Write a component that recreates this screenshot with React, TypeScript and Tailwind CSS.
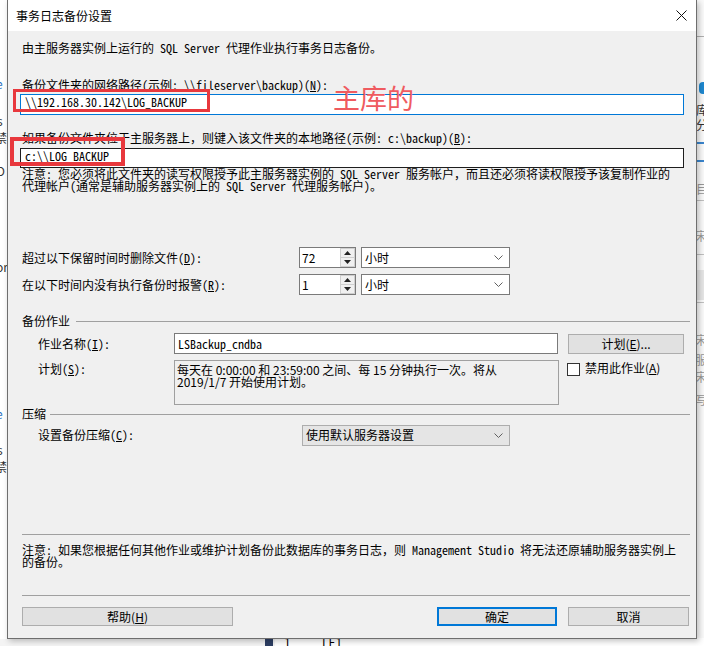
import React from "react";

const mono = "font-['Noto_Sans_Mono_CJK_SC','Noto_Sans_CJK_SC',sans-serif]";
const sans = "font-['Noto_Sans_CJK_SC',sans-serif]";

function U({ children }: { children: React.ReactNode }) {
  return <span className="underline underline-offset-[1px]">{children}</span>;
}

function Chevron() {
  return (
    <svg width="9" height="5" viewBox="0 0 9 5">
      <path d="M0.5 0.5L4.5 4.5L8.5 0.5" fill="none" stroke="#606060" strokeWidth="1" />
    </svg>
  );
}

function Spin({ value }: { value: string }) {
  return (
    <div className="w-[57px] h-[21px] border border-[#7a7a7a] bg-white flex">
      <div className={"flex-1 flex items-center pl-[2px] " + sans}>{value}</div>
      <div className="w-[15px] flex flex-col">
        <div className="flex-1 bg-[#f0f0f0] border border-[#cfcfcf] flex items-center justify-center">
          <svg width="7" height="4" viewBox="0 0 7 4">
            <path d="M0 4L3.5 0L7 4Z" fill="#222" />
          </svg>
        </div>
        <div className="flex-1 bg-[#f0f0f0] border border-[#cfcfcf] border-t-0 flex items-center justify-center">
          <svg width="7" height="4" viewBox="0 0 7 4">
            <path d="M0 0L3.5 4L7 0Z" fill="#222" />
          </svg>
        </div>
      </div>
    </div>
  );
}

function Select({ text, w, disabled }: { text: string; w: string; disabled?: boolean }) {
  return (
    <div
      className={
        "h-[21px] border flex items-center justify-between pl-[3px] pr-[6px] " +
        w +
        " " +
        sans +
        (disabled ? " bg-[#e5e5e5] border-[#adadad]" : " bg-white border-[#7a7a7a]")
      }
    >
      <span>{text}</span>
      <Chevron />
    </div>
  );
}

export default function App() {
  return (
    <div className="relative w-[704px] h-[646px] overflow-hidden bg-[#f4f4f4] text-black">
      {/* left background window */}
      <div className="absolute left-0 top-0 w-[10px] h-[639px] bg-white">
        <span className={"absolute left-[-4px] top-[75px] text-[12px] text-[#1f6fc0] " + sans}>e</span>
        <span className={"absolute left-[-3px] top-[112px] text-[12px] text-[#333] " + sans}>s</span>
        <span className={"absolute left-[-5px] top-[129px] text-[12px] text-[#333] " + sans}>禁</span>
        <span className={"absolute left-[-4px] top-[162px] text-[12px] text-[#333] " + sans}>O</span>
        <span className={"absolute left-[-4px] top-[258px] text-[12px] text-[#333] " + sans}>or</span>
        <span className={"absolute left-[-4px] top-[405px] text-[12px] text-[#1f6fc0] " + sans}>e</span>
        <span className={"absolute left-[-3px] top-[441px] text-[12px] text-[#333] " + sans}>s</span>
        <span className={"absolute left-[-5px] top-[458px] text-[12px] text-[#333] " + sans}>禁</span>
      </div>
      {/* right background window */}
      <div className="absolute left-[697px] top-0 w-[7px] h-[646px] bg-[#fafafa]">
        <div className="absolute left-0 top-[36px] w-[7px] h-px bg-[#b0b0b0]" />
        <div className="absolute left-[2px] top-[82px] w-[8px] h-[12px] rounded-full bg-[#1e88d0]" />
        <span className={"absolute left-[-1px] top-[101px] text-[12px] text-[#333] " + sans}>库</span>
        <span className={"absolute left-[-1px] top-[116px] text-[12px] text-[#333] " + sans}>分</span>
        <div className="absolute left-0 top-[142px] w-[7px] h-[20px] border-t-2 border-b-2 border-[#3a86cf]" />
        <span className={"absolute left-[-1px] top-[180px] text-[12px] text-[#999] " + sans}>目</span>
        <div className="absolute left-0 top-[200px] w-[7px] h-px bg-[#c0c0c0]" />
        <span className={"absolute left-[-2px] top-[227px] text-[12px] text-[#999] " + sans}>宋</span>
        <div className="absolute left-0 top-[254px] w-[7px] h-px bg-[#c0c0c0]" />
        <div className="absolute left-0 top-[270px] w-[7px] h-[30px] bg-[#e6e6e6]" />
        <div className="absolute left-0 top-[302px] w-[7px] h-px bg-[#c0c0c0]" />
        <span className={"absolute left-[-2px] top-[331px] text-[12px] text-[#999] " + sans}>宋</span>
        <span className={"absolute left-[-2px] top-[351px] text-[12px] text-[#999] " + sans}>服</span>
        <span className={"absolute left-[-2px] top-[368px] text-[12px] text-[#999] " + sans}>宋</span>
        <span className={"absolute left-[-2px] top-[391px] text-[12px] text-[#999] " + sans}>写</span>
      </div>
      {/* bottom background */}
      <div className="absolute left-[265px] top-[638px] w-[8px] h-[8px] bg-[#2d3e63]" />
      <div className="absolute left-[275px] top-[638px] w-[429px] h-[8px] bg-white" />
      <span className={"absolute left-[284px] top-[636px] text-[12px] leading-[12px] " + sans}>1</span>
      <span className={"absolute left-[322px] top-[636px] text-[12px] leading-[12px] " + sans}>LE1</span>

      {/* dialog */}
      <div className="absolute left-[7px] top-0 w-[690px] h-[639px] border-x border-b border-[#6e6e6e] bg-[#f0f0f0] flex flex-col text-[12px] shadow-[2px_2px_6px_rgba(0,0,0,0.25)]">
        <div className="h-[31px] shrink-0 bg-white flex items-center justify-between pl-[8px] pr-[9px]">
          <span className={"leading-none " + sans}>事务日志备份设置</span>
          <svg width="11" height="11" viewBox="0 0 11 11">
            <path d="M0.5 0.5L10.5 10.5M10.5 0.5L0.5 10.5" stroke="#111" strokeWidth="1" />
          </svg>
        </div>

        <div className={"flex flex-col pl-[14px] pr-[12px] " + mono}>
          <div className="mt-[10px] h-[14px] leading-[14px] whitespace-nowrap">
            由主服务器实例上运行的 SQL Server 代理作业执行事务日志备份。
          </div>

          <div className="mt-[23px] h-[14px] leading-[14px] whitespace-nowrap">
            {"备份文件夹的网络路径(示例: \\\\fileserver\\backup)("}
            <U>N</U>):
          </div>
          <div className="mt-[2px] ml-[-2px] h-[21px] border border-[#0078d7] bg-white flex items-center pl-[4px] pb-[6px] leading-[12px] whitespace-nowrap">
            {"\\\\192.168.30.142\\LOG_BACKUP"}
          </div>

          <div className="mt-[16px] h-[14px] leading-[14px] whitespace-nowrap">
            {"如果备份文件夹位于主服务器上，则键入该文件夹的本地路径(示例: c:\\backup)("}
            <U>B</U>):
          </div>
          <div className="mt-[3px] ml-[-2px] h-[20px] border border-[#1e1e1e] bg-white flex items-center pl-[4px] pb-[5px] leading-[12px] whitespace-nowrap">
            {"c:\\\\LOG_BACKUP"}
          </div>

          <div className="leading-[12px] whitespace-nowrap">
            <div>注意: 您必须将此文件夹的读写权限授予此主服务器实例的 SQL Server 服务帐户，而且还必须将读权限授予该复制作业的</div>
            <div>代理帐户(通常是辅助服务器实例上的 SQL Server 代理服务帐户)。</div>
          </div>

          <div className="mt-[55px] h-[21px] flex items-center">
            <div className="w-[277px] whitespace-nowrap">
              超过以下保留时间时删除文件(<U>D</U>):
            </div>
            <Spin value="72" />
            <div className="ml-[5px]">
              <Select text="小时" w="w-[149px]" />
            </div>
          </div>
          <div className="mt-[6px] h-[21px] flex items-center">
            <div className="w-[277px] whitespace-nowrap">
              在以下时间内没有执行备份时报警(<U>R</U>):
            </div>
            <Spin value="1" />
            <div className="ml-[5px]">
              <Select text="小时" w="w-[149px]" />
            </div>
          </div>

          <div className="mt-[19px] h-[14px] flex items-center gap-[6px] mr-[-6px]">
            <span className="leading-[14px]">备份作业</span>
            <div className="flex-1 h-px bg-[#a0a0a0]" />
          </div>

          <div className="mt-[5px] h-[21px] flex items-center pl-[16px]">
            <div className="w-[136px] whitespace-nowrap">
              作业名称(<U>I</U>):
            </div>
            <div className="w-[384px] h-[21px] border border-[#7a7a7a] bg-white flex items-center pl-[3px]">
              LSBackup_cndba
            </div>
            <div className={"ml-[10px] w-[116px] h-[20px] bg-[#e1e1e1] border border-[#adadad] flex items-center justify-center " + sans}>
              <span>
                计划(<U>E</U>)...
              </span>
            </div>
          </div>

          <div className="mt-[6px] flex items-start pl-[16px]">
            <div className="w-[136px] mt-[2px] leading-[14px] whitespace-nowrap">
              计划(<U>S</U>):
            </div>
            <div className={"w-[385px] h-[45px] border border-[#a0a0a0] bg-[#f0f0f0] pl-[2px] pt-[3px] leading-[12px] whitespace-nowrap " + sans}>
              <div>每天在 0:00:00 和 23:59:00 之间、每 15 分钟执行一次。将从</div>
              <div>2019/1/7 开始使用计划。</div>
            </div>
            <div className="ml-[8px] mt-[3px] w-[13px] h-[13px] border border-[#333] bg-white" />
            <div className={"ml-[5px] mt-[1px] leading-[14px] whitespace-nowrap " + sans}>
              禁用此作业(<U>A</U>)
            </div>
          </div>

          <div className="mt-[2px] h-[14px] flex items-center gap-[4px] mr-[-6px]">
            <span className="leading-[14px]">压缩</span>
            <div className="flex-1 h-px bg-[#a0a0a0]" />
          </div>

          <div className="mt-[4px] h-[20px] flex items-center pl-[16px]">
            <div className="w-[264px] whitespace-nowrap">
              设置备份压缩(<U>C</U>):
            </div>
            <Select text="使用默认服务器设置" w="w-[208px]" disabled />
          </div>

          <div className="mt-[89px] h-px bg-[#a0a0a0] mr-[-6px]" />

          <div className="mt-[9px] leading-[12px] whitespace-nowrap">
            <div>注意: 如果您根据任何其他作业或维护计划备份此数据库的事务日志，则 Management Studio 将无法还原辅助服务器实例上</div>
            <div>的备份。</div>
          </div>

          <div className="mt-[27px] h-px bg-[#a0a0a0] mr-[-6px]" />

          <div className={"mt-[11px] h-[19px] flex mr-[-5px] " + sans}>
            <div className="w-[211px] h-[19px] bg-[#e1e1e1] border border-[#adadad] flex items-center justify-center">
              <span>
                帮助(<U>H</U>)
              </span>
            </div>
            <div className="flex-1" />
            <div className="w-[120px] h-[19px] bg-[#e1e1e1] border-2 border-[#0078d7] flex items-center justify-center">
              确定
            </div>
            <div className="ml-[11px] w-[121px] h-[19px] bg-[#e1e1e1] border border-[#adadad] flex items-center justify-center">
              取消
            </div>
          </div>
        </div>
      </div>

      {/* red annotations */}
      <div className="absolute left-[13px] top-[89px] w-[197px] h-[23px] border-[3px] border-[#e8383d]" />
      <div className="absolute left-[10px] top-[137px] w-[115px] h-[29px] border-[4px] border-[#e8383d]" />
      <div className={"absolute left-[333px] top-[84px] text-[27px] leading-[27px] text-[#ef5b60] whitespace-nowrap " + sans}>
        主库的
      </div>
    </div>
  );
}
